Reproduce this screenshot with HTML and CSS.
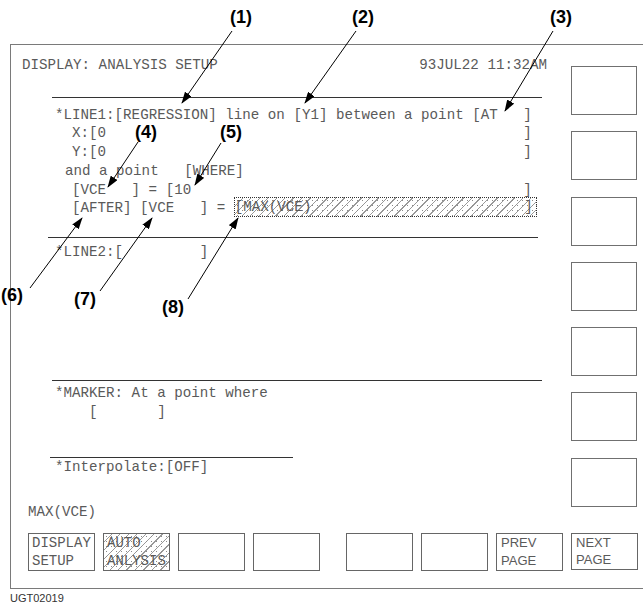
FILE: index.html
```html
<!DOCTYPE html>
<html>
<head>
<meta charset="utf-8">
<title>Display: Analysis Setup</title>
<link rel="stylesheet" href="styles.css">
</head>
<body>
<div class="page">
  <div class="screen">
    <div class="upper">
      <div class="main">
        <div class="header">
          <span>DISPLAY: ANALYSIS SETUP</span>
          <span class="time">93JUL22 11:32AM</span>
        </div>
        <div class="sep sep-a"></div>
        <div class="block1">
          <div class="row r-star w56"><span>*LINE1:[REGRESSION] line on [Y1] between a point [AT</span><span>]</span></div>
          <div class="row r-in w54"><span>X:[0</span><span>]</span></div>
          <div class="row r-in w54"><span>Y:[0</span><span>]</span></div>
          <div class="row r-and start"><span>and a point   [WHERE]</span></div>
          <div class="row r-in w54"><span>[VCE   ] = [10</span><span>]</span></div>
          <div class="row r-in start"><span>[AFTER] [VCE   ] = </span><span class="hatch field">[MAX(VCE)                         ]</span></div>
        </div>
        <div class="sep sep-b"></div>
        <div class="row r-star w18 line2"><span>*LINE2:[</span><span>]</span></div>
        <div class="sep sep-c"></div>
        <div class="block2">
          <div class="row r-star start"><span>*MARKER: At a point where</span></div>
          <div class="row r-star start"><span>    [       ]</span></div>
        </div>
        <div class="sep sep-d"></div>
        <div class="row r-star start interp"><span>*Interpolate:[OFF]</span></div>
        <div class="row start maxline"><span>MAX(VCE)</span></div>
      </div>
      <div class="side">
        <div class="skey"></div>
        <div class="skey"></div>
        <div class="skey"></div>
        <div class="skey"></div>
        <div class="skey"></div>
        <div class="skey"></div>
        <div class="skey"></div>
      </div>
    </div>
    <div class="keys">
      <div class="key mono">DISPLAY<br>SETUP</div>
      <div class="key mono hatch">AUTO<br>ANLYSIS</div>
      <div class="key"></div>
      <div class="key"></div>
      <div class="key spaced"></div>
      <div class="key"></div>
      <div class="key sans">PREV<br>PAGE</div>
      <div class="key sans next">NEXT<br>PAGE</div>
    </div>
  </div>
  <div class="figid">UGT02019</div>

  <div class="annot">
    <svg class="arrows" width="643" height="606" viewBox="0 0 643 606">
      <defs>
        <marker id="ah" markerUnits="userSpaceOnUse" markerWidth="12" markerHeight="8" refX="11" refY="4" orient="auto">
          <path d="M0,0 L12,4 L0,8 Z" fill="#000"/>
        </marker>
      </defs>
      <g stroke="#000" stroke-width="1" fill="none" marker-end="url(#ah)">
        <line x1="232" y1="31" x2="182" y2="103"/>
        <line x1="356" y1="31" x2="305" y2="103"/>
        <line x1="553" y1="31" x2="505" y2="111"/>
        <line x1="138" y1="142" x2="108" y2="187"/>
        <line x1="221" y1="143" x2="195" y2="185"/>
        <line x1="30" y1="288" x2="82" y2="218"/>
        <line x1="100" y1="291" x2="152" y2="218"/>
        <line x1="188" y1="299" x2="238" y2="218"/>
      </g>
    </svg>
    <div class="lbl l1">(1)</div>
    <div class="lbl l2">(2)</div>
    <div class="lbl l3">(3)</div>
    <div class="lbl l4">(4)</div>
    <div class="lbl l5">(5)</div>
    <div class="lbl l6">(6)</div>
    <div class="lbl l7">(7)</div>
    <div class="lbl l8">(8)</div>
  </div>
</div>
</body>
</html>
```
FILE: styles.css
```css
* { box-sizing: border-box; }
html, body { margin: 0; padding: 0; background: #fff; }
body { width: 643px; height: 606px; overflow: hidden; }

.page {
  position: relative;
  width: 643px;
  height: 606px;
  padding-top: 44px;
  padding-left: 10px;
  font-family: "Liberation Mono", "DejaVu Sans Mono", monospace;
  font-size: 14.2px;
  color: #5a5a5a;
}

.screen {
  width: 633px;
  height: 545px;
  border: 1px solid #7a7a7a;
  border-right: none;
}

.upper { display: flex; }
.main { flex: 1; padding-top: 10.5px; }

.header {
  display: flex;
  width: 525px;
  margin-left: 11px;
  line-height: 19px;
  white-space: pre;
}
.header .time { margin-left: auto; }

.sep { height: 0; border-top: 1px solid #333; }
.sep-a { margin-top: 22.5px; margin-left: 41px; width: 490px; }
.sep-b { margin-top: 18.7px; margin-left: 37px; width: 490px; }
.sep-c { margin-top: 117.5px; margin-left: 41px; width: 490px; }
.sep-d { margin-top: 34.5px; margin-left: 39px; width: 243px; }

.row {
  display: flex;
  justify-content: space-between;
  align-items: center;
  white-space: pre;
  line-height: 19px;
  height: 19px;
}
.row.start { justify-content: flex-start; }
.w56 { width: 56ch; }
.w54 { width: 54ch; }
.w18 { width: 18ch; }

.block1 { margin-top: 7.5px; }
.block1 .row { line-height: 18.8px; height: 18.8px; }
.r-star { margin-left: 44px; }
.r-in { margin-left: 61px; }
.r-and { margin-left: 54px; }

.line2 { margin-top: 5.5px; }
.block2 { margin-top: 3.5px; }
.interp { line-height: 18px; height: 18px; }
.maxline { margin-top: 27.5px; margin-left: 17px; }

.hatch {
  background-color: #fff;
  background-image:
    radial-gradient(circle, #8a8a8a 0.5px, transparent 0.8px),
    repeating-linear-gradient(135deg, transparent 0 5px, #999 5px 6px);
  background-size: 5px 5px, auto;
}
.field {
  display: inline-block;
  height: 20px;
  line-height: 18px;
  margin-top: -3px;
  border: 1px dotted #333;
  padding-right: 3px;
}

.side {
  width: 66px;
  margin-right: 6px;
  padding-top: 21px;
  display: flex;
  flex-direction: column;
  gap: 16.3px;
}
.skey {
  height: 49px;
  border: 1px solid #707070;
}

.keys {
  display: flex;
  gap: 8px;
  margin-top: 10.5px;
  margin-left: 17px;
}
.key {
  width: 67px;
  height: 38px;
  border: 1px solid #666;
  line-height: 18px;
  padding: 0 3px;
  white-space: nowrap;
}
.key.spaced { margin-left: 18px; }
.key.mono { font-size: 14px; }
.key.sans {
  font-family: "Liberation Sans", Arial, sans-serif;
  font-size: 13px;
  padding-left: 4px;
}
.key.next { height: 37px; line-height: 17px; }

.figid {
  margin-top: 3px;
  font-family: "Liberation Sans", Arial, sans-serif;
  font-size: 11px;
  line-height: 13px;
  color: #333;
}

.annot {
  position: absolute;
  left: 0;
  top: 0;
  width: 643px;
  height: 606px;
  pointer-events: none;
}
.arrows { position: absolute; left: 0; top: 0; }
.lbl {
  position: absolute;
  font-family: "Liberation Sans", Arial, sans-serif;
  font-weight: bold;
  font-size: 18px;
  line-height: 16px;
  color: #000;
}
.l1 { left: 230px; top: 9px; }
.l2 { left: 352px; top: 9px; }
.l3 { left: 550px; top: 9px; }
.l4 { left: 135px; top: 124.5px; line-height: 14px; }
.l5 { left: 220px; top: 124.5px; line-height: 14px; }
.l6 { left: 1px; top: 287px; }
.l7 { left: 74px; top: 291px; }
.l8 { left: 162px; top: 299px; }
```
